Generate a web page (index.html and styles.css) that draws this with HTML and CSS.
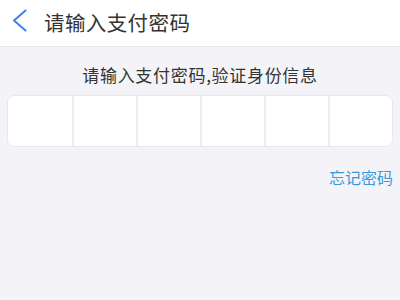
FILE: index.html
```html
<!DOCTYPE html>
<html lang="zh-CN">
<head>
<meta charset="utf-8">
<title>请输入支付密码</title>
<link rel="stylesheet" href="styles.css">
</head>
<body>
<header class="nav">
  <svg class="back" width="16" height="24" viewBox="0 0 16 24" aria-hidden="true">
    <path d="M13.5 1.5 L2 11.5 L13.5 21.5" fill="none" stroke="#3b7ff2" stroke-width="2" stroke-linecap="round" stroke-linejoin="round"/>
  </svg>
  <h1 class="title">请输入支付密码</h1>
</header>
<main class="content">
  <p class="hint">请输入支付密码,验证身份信息</p>
  <div class="pin">
    <div class="cell"></div>
    <div class="cell"></div>
    <div class="cell"></div>
    <div class="cell"></div>
    <div class="cell"></div>
    <div class="cell"></div>
  </div>
  <div class="forgot"><a class="forgot-link">忘记密码</a></div>
</main>
</body>
</html>
```

FILE: styles.css
```css
html, body {
  margin: 0;
  padding: 0;
}
body {
  width: 400px;
  height: 300px;
  background: #f4f4f8;
  font-family: "Noto Sans CJK SC", "Noto Sans", sans-serif;
  color: #333333;
  overflow: hidden;
}
.nav {
  height: 46px;
  background: #ffffff;
  border-bottom: 1px solid #e6e6eb;
  display: flex;
  align-items: center;
  padding-left: 12px;
  box-sizing: content-box;
}
.back {
  display: block;
  flex: none;
  margin-top: -4px;
}
.title {
  margin: -3px 0 0 16px;
  font-size: 20.5px;
  font-weight: 400;
  letter-spacing: 0.4px;
  line-height: 30px;
  color: #333333;
}
.content {
  display: flex;
  flex-direction: column;
}
.hint {
  margin: 17px 0 0 0;
  text-align: center;
  font-size: 17px;
  line-height: 22px;
  letter-spacing: 0.7px;
  color: #333333;
}
.pin {
  margin: 9px 7px 0 7px;
  height: 50px;
  background: #ffffff;
  border: 1px solid #e8e8ec;
  border-radius: 7px;
  display: grid;
  grid-template-columns: repeat(6, 1fr);
  overflow: hidden;
}
.cell + .cell {
  border-left: 2px solid #ececf0;
}
.forgot {
  margin-top: 19px;
  padding-right: 7px;
  text-align: right;
  font-size: 16px;
  line-height: 22px;
}
.forgot-link {
  color: #3a9ad9;
}
```
